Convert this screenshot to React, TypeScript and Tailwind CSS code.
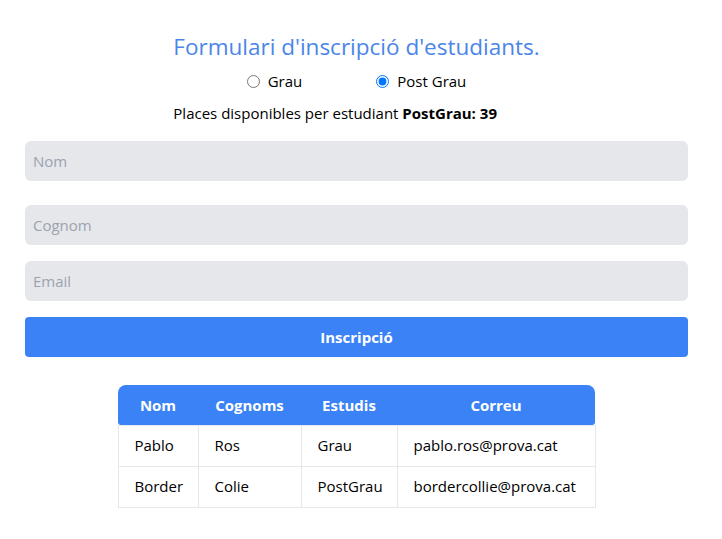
import React from "react";

const rows = [
  { nom: "Pablo", cognom: "Ros", estudis: "Grau", correu: "pablo.ros@prova.cat" },
  { nom: "Border", cognom: "Colie", estudis: "PostGrau", correu: "bordercollie@prova.cat" },
];

export default function App() {
  return (
    <div className="min-h-[539px] bg-white pl-[25px] pr-[34px] pt-[32px] text-[15px] text-black" style={{ fontFamily: '"Open Sans", "Noto Sans", sans-serif' }}>
      <div className="flex justify-center">
        <div className="flex flex-col">
          <h1 className="text-center text-[22.5px] leading-[30px] text-[#4a86e8]">Formulari d'inscripció d'estudiants.</h1>
          <div className="mt-[9px] flex items-center justify-center gap-[74px] leading-[20px]">
            <label className="flex items-center gap-[8px]">
              <input type="radio" name="tipus" className="m-0 h-[13px] w-[13px]" />
              <span>Grau</span>
            </label>
            <label className="flex items-center gap-[8px]">
              <input type="radio" name="tipus" defaultChecked className="m-0 h-[13px] w-[13px]" />
              <span>Post Grau</span>
            </label>
          </div>
          <p className="mt-[12px] leading-[20px]">
            Places disponibles per estudiant <b>PostGrau: 39</b>
          </p>
        </div>
      </div>
      <div className="mt-[18px] flex flex-col">
        <input placeholder="Nom" className="h-[40px] rounded-md bg-[#e5e7eb] px-[8px] outline-none placeholder:text-[#9ca3af]" />
        <input placeholder="Cognom" className="mt-[24px] h-[40px] rounded-md bg-[#e5e7eb] px-[8px] outline-none placeholder:text-[#9ca3af]" />
        <input placeholder="Email" className="mt-[16px] h-[40px] rounded-md bg-[#e5e7eb] px-[8px] outline-none placeholder:text-[#9ca3af]" />
        <button className="mt-[16px] h-[40px] rounded-[4px] bg-[#3b82f6] font-bold text-white">Inscripció</button>
      </div>
      <div className="mt-[28px] flex justify-center">
        <table className="border-collapse">
          <thead>
            <tr className="h-[40px] text-white">
              <th className="w-[80px] rounded-tl-lg rounded-bl-[3px] bg-[#3b82f6] font-bold">Nom</th>
              <th className="w-[103px] bg-[#3b82f6] font-bold">Cognoms</th>
              <th className="w-[96px] bg-[#3b82f6] font-bold">Estudis</th>
              <th className="w-[198px] rounded-tr-lg rounded-br-[3px] bg-[#3b82f6] font-bold">Correu</th>
            </tr>
          </thead>
          <tbody>
            {rows.map((r) => (
              <tr key={r.nom} className="h-[41px]">
                <td className="border border-[#e5e7eb] pl-[16px]">{r.nom}</td>
                <td className="border border-[#e5e7eb] pl-[16px]">{r.cognom}</td>
                <td className="border border-[#e5e7eb] pl-[16px]">{r.estudis}</td>
                <td className="border border-[#e5e7eb] pl-[16px]">{r.correu}</td>
              </tr>
            ))}
          </tbody>
        </table>
      </div>
    </div>
  );
}
